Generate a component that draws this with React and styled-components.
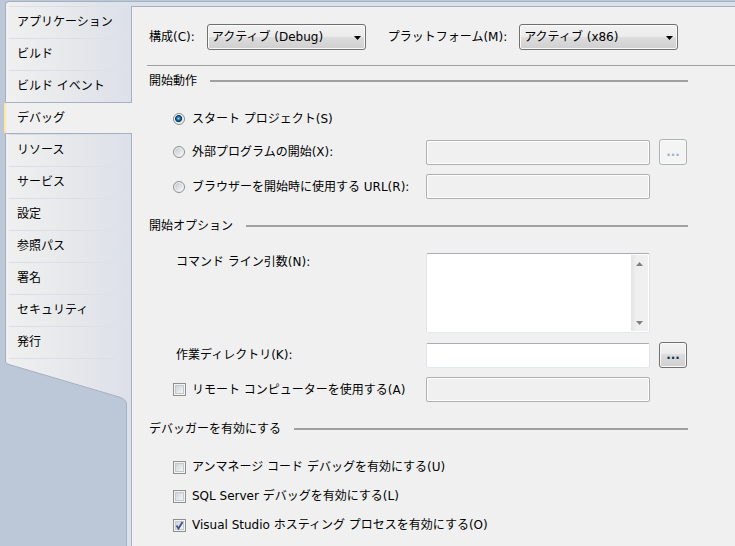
import React, { useState } from "react";
import styled, { createGlobalStyle, css } from "styled-components";

const line = "#a5b1c2";
const face = "#f0f0f0";
const strip = "#dce0e9";

const GlobalStyle = createGlobalStyle`
  *, *::before, *::after { box-sizing: border-box; }
  body {
    margin: 0;
    background: #bcc7d8;
    color: #000;
    font: 12px/18px "DejaVu Sans", "Noto Sans CJK JP", sans-serif;
  }
  input, select, textarea, button { font: inherit; color: inherit; margin: 0; }
`;

const Frame = styled.div`
  display: flex;
  flex-direction: column;
  min-height: 100vh;
  padding: 1px 0 0 5px;
`;

const TopStrip = styled.div`
  height: 5px;
  border-top: 1px solid ${line};
  border-left: 1px solid ${line};
  border-top-left-radius: 4px;
  background: linear-gradient(90deg, ${face}, ${strip} 126px);
`;

const Columns = styled.div`
  display: grid;
  grid-template-columns: 127px minmax(0, 1fr);
  flex: 1;
`;

const Sidebar = styled.nav`
  display: flex;
  flex-direction: column;
`;

const TabList = styled.ul`
  list-style: none;
  margin: 0;
  padding: 0;
  border-left: 1px solid ${line};
  background: linear-gradient(90deg, ${face}, #e6e8eb 50%, ${strip});
`;

const TabItem = styled.li`
  display: flex;
`;

const TabLink = styled.a`
  flex: 1;
  height: 32px;
  padding: 7px 0 0 11px;
  color: #000;
  text-decoration: none;
  white-space: nowrap;
  border-right: 1px solid ${line};
  background: linear-gradient(90deg, #d9dde6, #dadee7 70%, transparent) 3px 0 / 115px 1px no-repeat;

  ${(p) =>
    p.$selected &&
    css`
      margin-left: -2px;
      padding: 6px 0 0 11px;
      border: solid ${line};
      border-width: 1px 0;
      border-left: 2px solid #ffe8a6;
      border-radius: 3px 0 0 3px;
      background: ${face};
    `}
`;

const Slant = styled.svg`
  display: block;
`;

const SideStrip = styled.div`
  flex: 1;
  width: 6px;
  align-self: flex-end;
  border: solid ${line};
  border-width: 0 1px;
  background: ${strip};
`;

const Panel = styled.main`
  background: ${face};
  border-top: 1px solid ${line};
  padding-left: 15px;
  padding-bottom: 10px;
`;

const Toolbar = styled.div`
  display: flex;
  align-items: center;
  height: 59px;
  padding: 1px 0 0 2px;
  gap: 22px;
  border-bottom: 1px solid #a0a0a0;
`;

const ToolField = styled.div`
  display: flex;
  align-items: center;
  gap: 12px;
  white-space: nowrap;
`;

const SelectBox = styled.div`
  position: relative;
`;

const Select = styled.select`
  appearance: none;
  display: block;
  width: 159px;
  height: 26px;
  padding: 0 20px 0 4px;
  border: 1px solid #707070;
  border-radius: 3px;
  box-shadow: inset 0 0 0 1px #fafafa;
  background: linear-gradient(#f2f2f2, #ebebeb 48%, #dddddd 50%, #cfcfcf);
`;

const SelectArrow = styled.svg`
  position: absolute;
  right: 5px;
  top: 12px;
  pointer-events: none;
`;

const Section = styled.section`
  padding: ${(p) => (p.$first ? "5px" : "17px")} 47px 0 2px;
`;

const Heading = styled.h2`
  display: flex;
  align-items: center;
  gap: 13px;
  height: 20px;
  margin: 0;
  font-size: 12px;
  font-weight: 400;
  white-space: nowrap;

  &::after {
    content: "";
    flex: 1;
    height: 2px;
    background: #a0a0a0;
  }
`;

const Rows = styled.div`
  display: flex;
  flex-direction: column;
  gap: ${(p) => (p.$tight ? "7px" : "9px")};
  padding: 17px 1px 0 24px;
`;

const Row = styled.div`
  display: grid;
  grid-template-columns: 244px minmax(80px, 1fr) 28px;
  column-gap: 9px;
  align-items: ${(p) => (p.$top ? "start" : "center")};
  min-height: 22px;
`;

const Choice = styled.label`
  display: flex;
  align-items: center;
  gap: 6px;
  white-space: nowrap;
`;

const FieldLabel = styled.label`
  padding-left: 3px;
  white-space: nowrap;
`;

const Radio = styled.input.attrs({ type: "radio" })`
  appearance: none;
  width: 12px;
  height: 12px;
  margin-right: 1px;
  border: 1px solid #8e8f8f;
  border-radius: 50%;
  box-shadow: inset 0 0 0 1px #f4f4f4;
  background: linear-gradient(135deg, #bfc4ca, #f0f1f2 80%);

  &:checked {
    background: radial-gradient(circle at 45% 45%, #8fdcfa 0, #1f7db8 20%, #0b2f52 42%, #dfe3e8 50%);
  }
`;

const TickWrap = styled.span`
  display: grid;

  & > * { grid-area: 1 / 1; }
  & > svg { visibility: hidden; pointer-events: none; }
  & > input:checked + svg { visibility: visible; }
`;

const Tick = styled.input.attrs({ type: "checkbox" })`
  appearance: none;
  width: 13px;
  height: 13px;
  border: 1px solid #8e8f8f;
  padding: 2px;
  box-shadow: inset 0 0 0 1px #f4f4f4, inset 0 0 0 2px #c4c8ce;
  background: linear-gradient(135deg, #c6cad2, #f6f6f6 85%);
`;

const TextBox = styled.input.attrs({ type: "text" })`
  width: 100%;
  height: 25px;
  padding: 0 4px;
  border: 1px solid;
  border-color: #abadb3 #e2e3ea #e3e9ef #e2e3ea;
  border-radius: 2px;
  background: #fff;

  &:disabled {
    border-color: #afafaf;
    background: ${face};
    box-shadow: inset 0 0 0 1px #fff;
  }
`;

const BrowseButton = styled.button`
  display: grid;
  place-items: center;
  width: 28px;
  height: 26px;
  padding: 0;
  border: 1px solid #707070;
  border-radius: 3px;
  box-shadow: inset 0 0 0 1px #fafafa;
  background: linear-gradient(#f2f2f2, #ebebeb 46%, #dddddd 48%, #cfcfcf);
  color: #14304e;
  font-weight: 700;

  &:disabled {
    border-color: #adb2b5;
    background: #f4f4f4;
    color: #a3b3c3;
  }
`;

const AreaBox = styled.div`
  display: flex;
  height: 80px;
  padding: 1px;
  border: 1px solid;
  border-color: #abadb3 #e2e3ea #e3e9ef #e2e3ea;
  border-radius: 2px;
  background: #fff;
`;

const Area = styled.textarea`
  flex: 1;
  min-width: 0;
  border: 0;
  padding: 2px 4px;
  resize: none;
  overflow: hidden;
  outline: 0;
`;

const ScrollBar = styled.div`
  display: flex;
  flex-direction: column;
  justify-content: space-between;
  width: 17px;
  background: linear-gradient(90deg, #e3e3e3, #efefef 30%, #f0f0f0);
`;

const ScrollButton = styled.button`
  display: grid;
  place-items: center;
  height: 17px;
  padding: 0;
  border: 0;
  background: none;
`;

const tabs = [
  "アプリケーション",
  "ビルド",
  "ビルド イベント",
  "デバッグ",
  "リソース",
  "サービス",
  "設定",
  "参照パス",
  "署名",
  "セキュリティ",
  "発行",
];

function Combo({ id, label, options }) {
  return (
    <ToolField>
      <label htmlFor={id}>{label}</label>
      <SelectBox>
        <Select id={id}>
          {options.map((o) => (
            <option key={o}>{o}</option>
          ))}
        </Select>
        <SelectArrow width="7" height="4" viewBox="0 0 7 4" aria-hidden="true">
          <path d="M0 0h7L3.5 4z" />
        </SelectArrow>
      </SelectBox>
    </ToolField>
  );
}

function CheckChoice({ label, ...rest }) {
  return (
    <Choice>
      <TickWrap>
        <Tick {...rest} />
        <svg width="13" height="13" viewBox="0 0 13 13" aria-hidden="true">
          <path d="M3.5 6.5 5.5 9.5 9.5 3" fill="none" stroke="#3f5390" strokeWidth="1.8" />
        </svg>
      </TickWrap>
      {label}
    </Choice>
  );
}

function SidebarEnd() {
  const edge = "M.5 0V3Q.5 5.5 3 6.2L114 39Q121.5 41.5 121.5 46";
  return (
    <Slant width="127" height="46" viewBox="0 0 127 46" aria-hidden="true">
      <defs>
        <linearGradient id="side" gradientUnits="userSpaceOnUse" x1="0" y1="0" x2="127" y2="0">
          <stop offset="0" stopColor={face} />
          <stop offset=".5" stopColor="#e6e8eb" />
          <stop offset="1" stopColor={strip} />
        </linearGradient>
      </defs>
      <path d={`${edge}H127V0z`} fill="url(#side)" />
      <path d={edge} fill="none" stroke={line} />
      <path d="M4 .5H110" stroke="#dadee7" />
      <path d="M126.5 0V46" stroke={line} />
    </Slant>
  );
}

export default function App() {
  const [tab, setTab] = useState("デバッグ");
  const [action, setAction] = useState("project");
  const [remote, setRemote] = useState(false);

  return (
    <Frame>
      <GlobalStyle />
      <TopStrip />
      <Columns>
        <Sidebar>
          <TabList>
            {tabs.map((t, i) => (
              <TabItem key={t}>
                <TabLink
                  href={`#tab${i}`}
                  $selected={t === tab}
                  aria-current={t === tab ? "page" : undefined}
                  onClick={() => setTab(t)}
                >
                  {t}
                </TabLink>
              </TabItem>
            ))}
          </TabList>
          <SidebarEnd />
          <SideStrip />
        </Sidebar>

        <Panel>
          <Toolbar>
            <Combo id="config" label="構成(C):" options={["アクティブ (Debug)", "Debug", "Release"]} />
            <Combo id="platform" label="プラットフォーム(M):" options={["アクティブ (x86)", "x86"]} />
          </Toolbar>

          <Section $first>
            <Heading>開始動作</Heading>
            <Rows>
              <Row>
                <Choice>
                  <Radio name="action" checked={action === "project"} onChange={() => setAction("project")} />
                  スタート プロジェクト(S)
                </Choice>
              </Row>
              <Row>
                <Choice>
                  <Radio name="action" checked={action === "program"} onChange={() => setAction("program")} />
                  外部プログラムの開始(X):
                </Choice>
                <TextBox aria-label="外部プログラムの開始" disabled={action !== "program"} />
                <BrowseButton type="button" disabled={action !== "program"}>...</BrowseButton>
              </Row>
              <Row>
                <Choice>
                  <Radio name="action" checked={action === "url"} onChange={() => setAction("url")} />
                  ブラウザーを開始時に使用する URL(R):
                </Choice>
                <TextBox aria-label="URL" disabled={action !== "url"} />
              </Row>
            </Rows>
          </Section>

          <Section>
            <Heading>開始オプション</Heading>
            <Rows>
              <Row $top>
                <FieldLabel htmlFor="args">コマンド ライン引数(N):</FieldLabel>
                <AreaBox>
                  <Area id="args" />
                  <ScrollBar>
                    <ScrollButton type="button" aria-label="上へ">
                      <svg width="7" height="4" viewBox="0 0 7 4"><path d="M0 4h7L3.5 0z" fill="#808080" /></svg>
                    </ScrollButton>
                    <ScrollButton type="button" aria-label="下へ">
                      <svg width="7" height="4" viewBox="0 0 7 4"><path d="M0 0h7L3.5 4z" fill="#808080" /></svg>
                    </ScrollButton>
                  </ScrollBar>
                </AreaBox>
              </Row>
              <Row>
                <FieldLabel htmlFor="workdir">作業ディレクトリ(K):</FieldLabel>
                <TextBox id="workdir" />
                <BrowseButton type="button">...</BrowseButton>
              </Row>
              <Row>
                <CheckChoice
                  label="リモート コンピューターを使用する(A)"
                  checked={remote}
                  onChange={(e) => setRemote(e.target.checked)}
                />
                <TextBox aria-label="リモート コンピューター" disabled={!remote} />
              </Row>
            </Rows>
          </Section>

          <Section>
            <Heading>デバッガーを有効にする</Heading>
            <Rows $tight>
              <Row><CheckChoice label="アンマネージ コード デバッグを有効にする(U)" /></Row>
              <Row><CheckChoice label="SQL Server デバッグを有効にする(L)" /></Row>
              <Row><CheckChoice label="Visual Studio ホスティング プロセスを有効にする(O)" defaultChecked /></Row>
            </Rows>
          </Section>
        </Panel>
      </Columns>
    </Frame>
  );
}
